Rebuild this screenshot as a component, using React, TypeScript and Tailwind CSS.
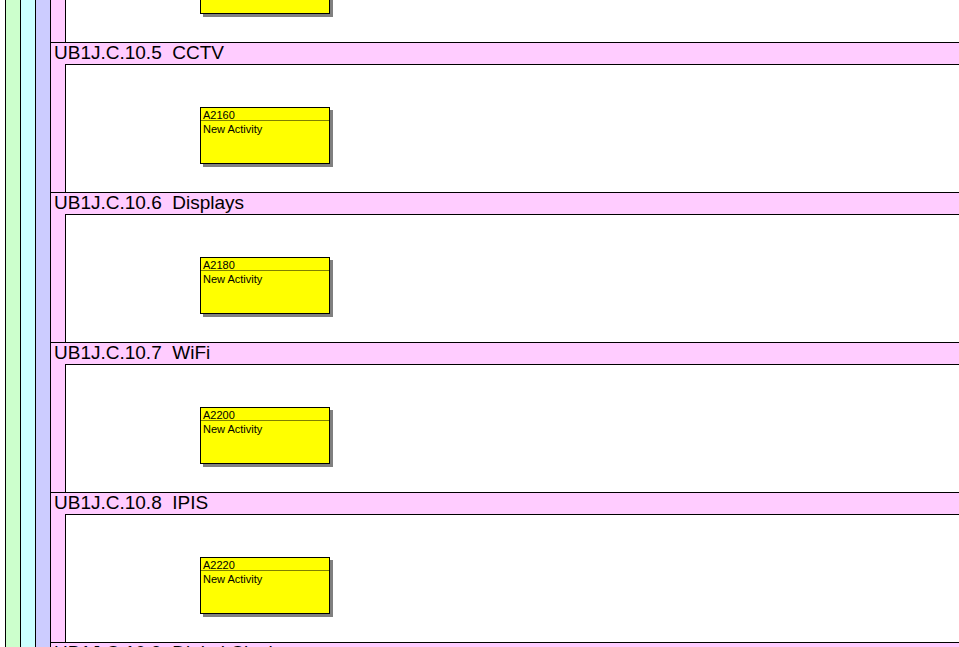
import React from "react";

const sections = [
  { code: "UB1J.C.10.4", name: "Access Control", id: "A2140" },
  { code: "UB1J.C.10.5", name: "CCTV", id: "A2160" },
  { code: "UB1J.C.10.6", name: "Displays", id: "A2180" },
  { code: "UB1J.C.10.7", name: "WiFi", id: "A2200" },
  { code: "UB1J.C.10.8", name: "IPIS", id: "A2220" },
  { code: "UB1J.C.10.9", name: "Digital Clocks", id: "A2240" },
];

function Activity({ id }: { id: string }) {
  return (
    <div className="ml-[134px] mt-[42px] w-[130px] h-[57px] border border-black bg-[#ffff00] shadow-[3px_3px_0_#808080] text-[11px] text-black overflow-hidden" style={{ fontFamily: '"Liberation Sans", Arial, sans-serif' }}>
      <div className="h-[13px] pl-[2px] border-b border-[#808000] overflow-hidden">
        <div className="pt-[2px] leading-[10px]">{id}</div>
      </div>
      <div className="pl-[2px] pt-[2px] leading-[12px]">New Activity</div>
    </div>
  );
}

export default function App() {
  return (
    <div className="w-[959px] h-[647px] overflow-hidden bg-white flex" style={{ fontFamily: '"Liberation Sans", Arial, sans-serif' }}>
      <div className="w-[5px] shrink-0" />
      <div className="w-[15px] shrink-0 border-l border-black bg-[#ccffcc]" />
      <div className="w-[15px] shrink-0 border-l border-black bg-[#ccffff]" />
      <div className="w-[15px] shrink-0 border-l border-black bg-[#ccccff]" />
      <div className="flex-1 border-l border-black bg-[#ffccff] flex flex-col">
        <div className="mt-[-108px] flex flex-col">
          {sections.map((s) => (
            <div key={s.code} className="flex flex-col">
              <div className="h-[22px] border-t border-black bg-[#ffccff] pl-[3px] text-[19px] leading-[20px] text-black whitespace-pre">
                {s.code}  {s.name}
              </div>
              <div className="h-[128px] ml-[14px] border-t border-l border-black bg-white">
                <Activity id={s.id} />
              </div>
            </div>
          ))}
        </div>
      </div>
    </div>
  );
}
